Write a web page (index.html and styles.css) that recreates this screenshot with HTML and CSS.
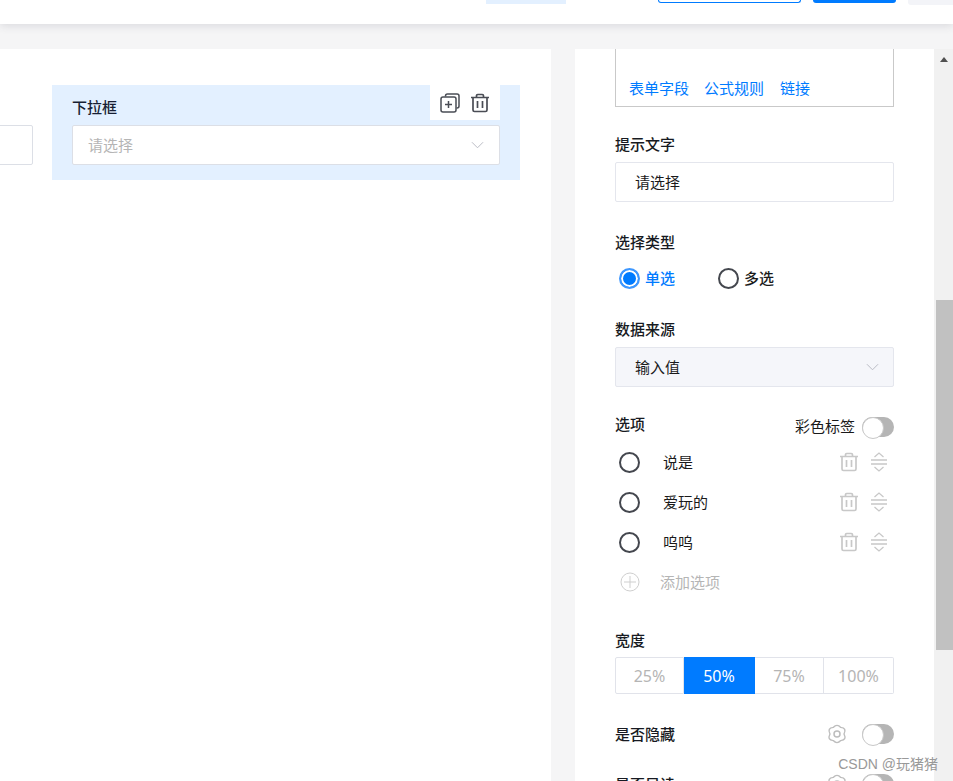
FILE: index.html
```html
<!DOCTYPE html>
<html lang="zh-CN">
<head>
<meta charset="utf-8">
<title>表单设计器</title>
<link rel="stylesheet" href="styles.css">
</head>
<body>
<svg class="defs" width="0" height="0" aria-hidden="true">
  <symbol id="i-trash" viewBox="0 0 20 20"><path d="M1 4.500h18M6.500 4.500V2.800q0-1.300 1.300-1.300h4.400q1.300 0 1.300 1.300v1.700M3 4.500v12.500q0 1.500 1.500 1.500h11q1.500 0 1.500-1.500V4.500M7.500 8v7M12.500 8v7" fill="none" stroke="currentColor" stroke-width="1.700"/></symbol>
  <symbol id="i-copy" viewBox="0 0 20 20"><path d="M5.500 3.500V3q0-2 2-2h9.500q2 0 2 2v10q0 2-2 2h-.5" fill="none" stroke="currentColor" stroke-width="1.500"/><rect x="1" y="4" width="15" height="15" rx="2" fill="none" stroke="currentColor" stroke-width="1.500"/><path d="M8.500 8v7M5 11.500h7" fill="none" stroke="currentColor" stroke-width="1.500"/></symbol>
  <symbol id="i-sort" viewBox="0 0 18 20"><path d="M4.500 5 9 1l4.500 4M1 8h16M1 12h16M4.500 15 9 19l4.500-4" fill="none" stroke="currentColor" stroke-width="1.300"/></symbol>
  <symbol id="i-gear" viewBox="0 0 20 20"><path d="M6.200 3.400Q10 -.6 13.800 3.400Q20 4 17 10Q20 16 13.800 16.600Q10 20.600 6.200 16.600Q0 16 3 10Q0 4 6.200 3.400Z" fill="none" stroke="currentColor" stroke-width="1.400" stroke-linejoin="round"/><circle cx="10" cy="10" r="3" fill="none" stroke="currentColor" stroke-width="1.500"/></symbol>
  <symbol id="i-chev" viewBox="0 0 14 8"><path d="M1 1l6 6 6-6" fill="none" stroke="currentColor" stroke-width="1"/></symbol>
  <symbol id="i-plus" viewBox="0 0 20 20"><circle cx="10" cy="10" r="9" fill="none" stroke="currentColor" stroke-width="1"/><path d="M10 4v12M4 10h12" fill="none" stroke="currentColor" stroke-width="1"/></symbol>
</svg>

<header class="topbar">
  <div class="tool tool-tab"></div>
  <div class="tool tool-outline"></div>
  <div class="tool tool-primary"></div>
  <div class="tool tool-gray"></div>
</header>

<div class="workspace">
  <main class="canvas">
    <div class="field">
      <div class="field-label"></div>
      <div class="input"></div>
    </div>
    <div class="field field-active">
      <div class="field-tools">
        <svg class="tool-icon"><use href="#i-copy"/></svg>
        <svg class="tool-icon"><use href="#i-trash"/></svg>
      </div>
      <div class="field-label">下拉框</div>
      <div class="input input-select">
        <span class="placeholder">请选择</span>
        <svg class="chev"><use href="#i-chev"/></svg>
      </div>
    </div>
  </main>

  <aside class="panel">
    <div class="formula">
      <a class="link">表单字段</a>
      <a class="link">公式规则</a>
      <a class="link">链接</a>
    </div>

    <div class="label label-hint">提示文字</div>
    <div class="box"><span class="box-text">请选择</span></div>

    <div class="label label-type">选择类型</div>
    <div class="radios">
      <div class="radio-item radio-on"><span class="radio radio-checked"></span><span class="radio-text">单选</span></div>
      <div class="radio-item"><span class="radio"></span><span class="radio-text">多选</span></div>
    </div>

    <div class="label label-source">数据来源</div>
    <div class="box box-muted">
      <span class="box-text">输入值</span>
      <svg class="chev"><use href="#i-chev"/></svg>
    </div>

    <div class="options-head">
      <div class="label">选项</div>
      <div class="color-tag">
        <span class="tag-text">彩色标签</span>
        <span class="switch"></span>
      </div>
    </div>
    <div class="option">
      <span class="radio"></span><span class="option-text">说是</span>
      <svg class="op-trash"><use href="#i-trash"/></svg>
      <svg class="op-sort"><use href="#i-sort"/></svg>
    </div>
    <div class="option">
      <span class="radio"></span><span class="option-text">爱玩的</span>
      <svg class="op-trash"><use href="#i-trash"/></svg>
      <svg class="op-sort"><use href="#i-sort"/></svg>
    </div>
    <div class="option">
      <span class="radio"></span><span class="option-text">呜呜</span>
      <svg class="op-trash"><use href="#i-trash"/></svg>
      <svg class="op-sort"><use href="#i-sort"/></svg>
    </div>
    <div class="option option-add">
      <svg class="add-icon"><use href="#i-plus"/></svg>
      <span class="add-text">添加选项</span>
    </div>

    <div class="label label-width">宽度</div>
    <div class="segments">
      <div class="seg seg-a">25%</div>
      <div class="seg seg-on">50%</div>
      <div class="seg seg-c">75%</div>
      <div class="seg seg-d">100%</div>
    </div>

    <div class="setting setting-first">
      <div class="label">是否隐藏</div>
      <svg class="gear"><use href="#i-gear"/></svg>
      <span class="switch"></span>
    </div>
    <div class="setting">
      <div class="label label-clipped">是否只读</div>
      <svg class="gear"><use href="#i-gear"/></svg>
      <span class="switch"></span>
    </div>
  </aside>

  <div class="scrollbar">
    <div class="scroll-up"></div>
    <div class="scroll-thumb"></div>
  </div>
</div>

<div class="watermark">CSDN @玩猪猪</div>
</body>
</html>
```

FILE: styles.css
```css
* { box-sizing: border-box; }

html, body {
  margin: 0;
  height: 781px;
  overflow: hidden;
}

body {
  position: relative;
  background: #f5f5f6;
  font-family: "Noto Sans CJK SC", "Noto Sans", sans-serif;
  font-size: 15px;
  color: #1a1a1a;
}

.defs { position: absolute; }

/* top bar */
.topbar {
  height: 24px;
  background: #fff;
  box-shadow: 0 2px 8px rgba(60, 60, 80, 0.14);
  display: flex;
  align-items: flex-start;
  position: relative;
  z-index: 1;
}

.tool { flex: none; }
.tool-tab { width: 80px; height: 4px; margin-left: 486px; background: #e3f0ff; }
.tool-outline {
  width: 143px; height: 3px; margin-left: 92px;
  border: 1px solid #007bff; border-top: 0;
  border-radius: 0 0 3px 3px;
}
.tool-primary { width: 83px; height: 3px; margin-left: 12px; background: #007bff; border-radius: 0 0 3px 3px; }
.tool-gray { width: 45px; height: 5px; margin-left: 12px; background: #f3f4f8; border-radius: 0 0 0 3px; }

/* workspace */
.workspace {
  display: flex;
  margin-top: 25px;
  height: 732px;
}

.canvas {
  flex: none;
  width: 551px;
  background: #fff;
  display: flex;
  align-items: flex-start;
  padding-top: 36px;
  overflow: hidden;
}

.field {
  flex: none;
  width: 468px;
  height: 95px;
  padding: 12px 20px 0;
}

.field:first-child { margin-left: -415px; }
.field-active { position: relative; background: #e3f0ff; margin-left: -1px; }

.field-label {
  font-size: 15px;
  font-weight: 500;
  line-height: 20px;
  color: #171e33;
  height: 20px;
}

.field-tools {
  position: absolute;
  top: 0;
  right: 20px;
  width: 70px;
  height: 35px;
  background: #fff;
  display: flex;
  align-items: center;
  justify-content: space-between;
  padding: 0 10px;
  color: #4a4d55;
}

.tool-icon { width: 20px; height: 20px; flex: none; }

.input {
  margin-top: 8px;
  height: 40px;
  background: #fff;
  border: 1px solid #dcdfe6;
  border-radius: 2px;
}

.input-select {
  display: flex;
  align-items: center;
  justify-content: space-between;
  padding: 0 15px 0 15px;
}

.placeholder { color: #b5b5b5; padding-bottom: 2px; }

.chev { width: 13px; height: 8px; color: #b5b8c0; flex: none; }

/* right panel */
.panel {
  flex: none;
  width: 359px;
  margin-left: 24px;
  background: #fff;
  padding: 0 40px 0 40px;
  overflow: hidden;
}

.formula {
  height: 58px;
  width: 279px;
  border: 1px solid #c9c9c9;
  border-top: 0;
  display: flex;
  gap: 14px;
  align-items: flex-end;
  padding: 0 13px 8px;
}

.link { color: #007bff; line-height: 20px; }
.link:nth-child(2) { margin-left: 1px; }
.link:nth-child(3) { margin-left: 2px; }

.label {
  font-size: 15px;
  font-weight: 500;
  line-height: 20px;
  height: 20px;
  color: #171a22;
}

.label-hint { margin-top: 27px; }
.label-type { margin-top: 30px; }
.label-source { margin-top: 29px; }
.label-width { margin-top: 28px; }

.box {
  margin-top: 8px;
  width: 279px;
  height: 40px;
  border: 1px solid #e4e6ed;
  border-radius: 2px;
  background: #fff;
  padding: 0 14px 0 19px;
  display: flex;
  align-items: center;
  justify-content: space-between;
}

.box-text { padding-bottom: 2px; }

.box-muted { background: #f5f6fa; }

.radios {
  display: flex;
  height: 24px;
  margin-top: 14px;
  padding-left: 4px;
}

.radio-item {
  display: flex;
  align-items: center;
  gap: 5px;
  width: 99px;
  font-weight: 500;
}

.radio-text { padding-bottom: 2px; }

.radio-on { color: #007bff; }

.radio {
  flex: none;
  width: 21px;
  height: 21px;
  border: 2px solid #44474e;
  border-radius: 50%;
  background: #fff;
}

.radio-checked {
  border-color: #3d97ff;
  background: #007bff;
  box-shadow: inset 0 0 0 2px #fff;
}

.options-head {
  margin-top: 27px;
  width: 279px;
  display: flex;
  justify-content: space-between;
  height: 28px;
}

.color-tag {
  display: flex;
  align-items: center;
  gap: 7px;
  height: 20px;
  margin-top: 3px;
}

.tag-text { padding-bottom: 4px; }

.switch {
  display: block;
  flex: none;
  width: 32px;
  height: 20px;
  border-radius: 10px;
  background: #b5b5b5;
  position: relative;
}

.switch::before {
  content: "";
  position: absolute;
  left: 0;
  top: 0;
  width: 20px;
  height: 20px;
  border-radius: 50%;
  background: #fff;
  border: 1px solid #c8c8c8;
}

.option {
  width: 279px;
  height: 40px;
  display: flex;
  align-items: center;
  padding-left: 4px;
}

.option-text { margin-left: 23px; flex: 1; padding-bottom: 2px; }
.op-trash { width: 20px; height: 20px; color: #c8c8c8; flex: none; margin-right: 11px; }
.op-sort { width: 18px; height: 20px; color: #c8c8c8; flex: none; margin-right: 6px; }

.option-add { color: #b5b5b5; padding-left: 5px; }
.add-icon { width: 20px; height: 20px; color: #cfcfcf; margin-right: 20px; flex: none; }
.add-text { padding-bottom: 2px; }

.segments {
  display: flex;
  width: 279px;
  height: 37px;
  margin-top: 7px;
}

.seg {
  display: flex;
  align-items: center;
  justify-content: center;
  color: #b5b5b5;
  border: 1px solid #e1e3ea;
  border-left: 0;
  font-family: "Noto Sans", sans-serif;
  font-size: 16px;
}

.seg-a { width: 69px; border-left: 1px solid #e1e3ea; border-radius: 2px 0 0 2px; }
.seg-on { width: 71px; background: #007bff; border-color: #007bff; color: #fff; }
.seg-c { width: 69px; border-right: 1px solid #e1e3ea; }
.seg-d { width: 70px; border-radius: 0 2px 2px 0; }

.setting {
  width: 279px;
  height: 20px;
  margin-top: 30px;
  display: flex;
  align-items: center;
}

.setting .label { flex: 1; }
.gear { width: 20px; height: 20px; color: #bdbdbd; margin-right: 15px; flex: none; }

/* scrollbar */
.scrollbar {
  flex: none;
  width: 19px;
  background: #f1f1f1;
  padding-left: 2px;
  position: relative;
}

.scroll-up {
  width: 0;
  height: 0;
  margin: 8px 0 0 4px;
  border-left: 4px solid transparent;
  border-right: 4px solid transparent;
  border-bottom: 5px solid #505050;
}

.scroll-thumb {
  height: 350px;
  margin-top: 238px;
  background: #c1c1c1;
}

.watermark {
  position: absolute;
  right: 15px;
  bottom: 7px;
  font-size: 14px;
  line-height: 20px;
  color: #999;
  font-family: "Liberation Sans", "Noto Sans CJK SC", sans-serif;
}
```
